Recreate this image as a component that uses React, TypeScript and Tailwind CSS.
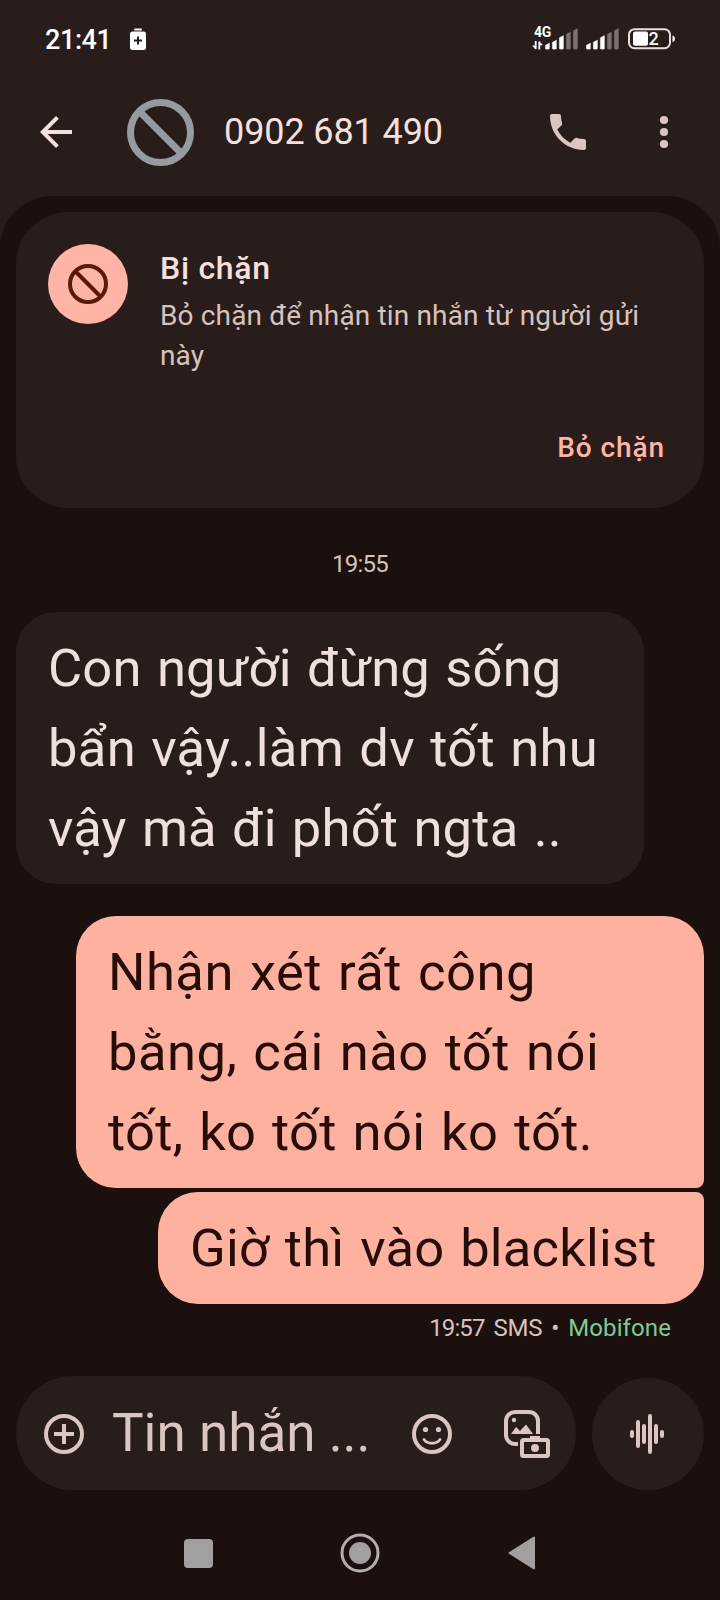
import type { ReactNode } from "react";
import clsx from "clsx";

const signalBars = [
  { x: 0, top: 15 },
  { x: 7, top: 12 },
  { x: 14, top: 7.5 },
  { x: 21, top: 4 },
  { x: 28, top: 0.5 },
];

function Signal() {
  return (
    <svg width="33" height="22" viewBox="0 0 33 22">
      {signalBars.map((b, i) => (
        <path
          key={b.x}
          d={`M${b.x + 0.3} ${b.top + 2.2}L${b.x + 4.5} ${b.top}V20.2a1 1 0 0 1-1 1H${b.x + 1.3}a1 1 0 0 1-1-1Z`}
          fill={i < 3 ? "#ffffff" : "#7b7270"}
          stroke={i < 3 ? "#ffffff" : "#7b7270"}
          strokeWidth="0.3"
        />
      ))}
    </svg>
  );
}

function StatusBar() {
  return (
    <div className="flex h-[68px] items-start pt-[28px] pl-[45px] pr-[44px] text-white">
      <span className="mt-[-4px] w-[85px] text-[27px] font-medium leading-8 tracking-[-0.4px]">21:41</span>
      <svg className="mr-auto shrink-0" width="16" height="22" viewBox="0 0 16 22">
        <rect x="4" y="0.5" width="8" height="2" rx="1" fill="#fff" />
        <rect x="0" y="3.5" width="16" height="18.5" rx="2.5" fill="#fff" />
        <path d="M8 8.5v8M4 12.5h8" stroke="#281d1b" strokeWidth="2" />
      </svg>
      <div className="relative flex shrink-0">
        <span className="absolute -left-[11px] -top-[4px] text-[14px] font-bold leading-4 tracking-[-0.3px]">4G</span>
        <svg className="absolute -left-[13px] top-[13px]" width="11" height="9" viewBox="0 0 11 9">
          <path d="M3.7 0v8M7.3 8.5V.5" stroke="#fff" strokeWidth="1.8" />
          <path d="M0 4.5l3.700 4V4.500ZM11 4.200L7.300.5v3.700Z" fill="#fff" />
        </svg>
        <Signal />
      </div>
      <div className="ml-[8px] shrink-0">
        <Signal />
      </div>
      <svg className="ml-[9px] shrink-0" width="48" height="22" viewBox="0 0 48 22">
        <rect x="1" y="1.2" width="41" height="19" rx="5.5" fill="none" stroke="#e6e2e1" strokeWidth="2" />
        <path d="M44.5 7.5c2 .5 2.3 1.5 2.3 3.3s-.3 2.7-2.3 3.2Z" fill="#fff" />
        <rect x="5" y="3.5" width="15" height="14.3" rx="2" fill="#fff" />
        <text x="20.5" y="17.4" fill="#fff" fontSize="18" fontWeight="500" fontFamily="Roboto, sans-serif">
          2
        </text>
      </svg>
    </div>
  );
}

function BlockIcon({ size, stroke, color }: { size: number; stroke: number; color: string }) {
  const r = (size - stroke) / 2;
  const c = size / 2;
  const d = r * Math.SQRT1_2;
  return (
    <svg width={size} height={size} viewBox={`0 0 ${size} ${size}`} fill="none" stroke={color} strokeWidth={stroke}>
      <circle cx={c} cy={c} r={r} />
      <path d={`M${c - d} ${c - d}L${c + d} ${c + d}`} />
    </svg>
  );
}

function TopBar() {
  return (
    <header className="flex h-32 items-center pl-8 pr-8">
      <svg width="48" height="48" viewBox="0 0 24 24" fill="#f5e0dc">
        <path d="M20 11H7.83l5.59-5.59L12 4l-8 8 8 8 1.41-1.41L7.83 13H20v-2z" />
      </svg>
      <div className="ml-[46.5px]">
        <BlockIcon size={67} stroke={7} color="#969b9f" />
      </div>
      <h1 className="ml-[30.5px] text-[36px] leading-10 tracking-[-0.1px] text-[#f5e0dc]">0902 681 490</h1>
      <svg className="ml-auto" width="48" height="48" viewBox="0 0 24 24" fill="#dbc5c0">
        <path d="M6.54 5c.06.89.21 1.76.45 2.59l-1.2 1.2c-.41-1.2-.67-2.47-.76-3.79h1.51M6.62 10.79c1.44 2.83 3.76 5.14 6.59 6.59l2.2-2.2c.27-.27.67-.36 1.02-.24 1.12.37 2.33.57 3.57.57.55 0 1 .45 1 1V20c0 .55-.45 1-1 1-9.39 0-17-7.61-17-17 0-.55.45-1 1-1h3.5c.55 0 1 .45 1 1 0 1.25.2 2.45.57 3.57.11.35.03.74-.25 1.02l-2.2 2.2z" />
      </svg>
      <svg className="ml-[48px]" width="48" height="48" viewBox="0 0 24 24" fill="#dbc5c0">
        <circle cx="12" cy="6" r="2.05" />
        <circle cx="12" cy="12" r="2.05" />
        <circle cx="12" cy="18" r="2.05" />
      </svg>
    </header>
  );
}

function BlockedCard() {
  return (
    <section className="h-[296px] rounded-[52px] bg-[#281d1b] px-8 pt-8">
      <div className="flex">
        <div className="flex size-20 shrink-0 items-center justify-center rounded-full bg-[#ffb4a5]">
          <BlockIcon size={40} stroke={4} color="#5b190d" />
        </div>
        <div className="ml-8 whitespace-nowrap">
          <h2 className="text-[32px] font-medium leading-[48px] tracking-[0.7px] text-[#f5e0dc]">Bị chặn</h2>
          <p className="mt-1 text-[28px] leading-10 tracking-[0.15px] text-[#d8c2bd]">
            <span className="block">Bỏ chặn để nhận tin nhắn từ người gửi</span>
            <span className="block">này</span>
          </p>
        </div>
      </div>
      <div className="mt-[52px] flex justify-end pr-2">
        <button className="-mr-[0.9px] text-[28px] font-medium leading-10 tracking-[0.9px] text-[#ffb4a5]">Bỏ chặn</button>
      </div>
    </section>
  );
}

function Bubble({ className, children }: { className: string; children: ReactNode }) {
  return (
    <div className={clsx("whitespace-nowrap px-8 py-4 text-[52.5px] leading-[80px]", className)}>
      {children}
    </div>
  );
}

function Composer() {
  return (
    <div className="mt-8 flex items-end gap-4">
      <div className="flex h-[114px] w-[560px] items-center rounded-full bg-[#281d1b] pl-7 pt-0.5">
        <svg width="40" height="40" viewBox="0 0 40 40" fill="none" stroke="#dbc5c0" strokeWidth="4">
          <circle cx="20" cy="20" r="18" />
          <path d="M20 10v20M10 20h20" />
        </svg>
        <span className="-mt-0.5 ml-7 w-[272px] whitespace-nowrap text-[53px] leading-[80px] text-[#dbc5c0]">Tin nhắn ...</span>
        <svg className="ml-7" width="40" height="40" viewBox="0 0 40 40" fill="none" stroke="#dbc5c0">
          <circle cx="20" cy="20" r="18" strokeWidth="4" />
          <path d="M12 25.5c3.5 5 12.5 5 16 0" strokeWidth="2.8" strokeLinecap="round" />
          <circle cx="13.5" cy="15.5" r="2.6" fill="#dbc5c0" stroke="none" />
          <circle cx="26.5" cy="15.5" r="2.6" fill="#dbc5c0" stroke="none" />
        </svg>
        <svg className="ml-[52px]" width="46" height="48" viewBox="0 0 46 48" fill="none" stroke="#dbc5c0">
          <path d="M14 34h-3a9 9 0 0 1-9-9V11a9 9 0 0 1 9-9h14a9 9 0 0 1 9 9v13" strokeWidth="4" />
          <circle cx="10" cy="10" r="2.2" fill="#dbc5c0" stroke="none" />
          <path d="M7 24l5-7 4 4 6-6.500 7 9.500Z" fill="#dbc5c0" stroke="none" />
          <rect x="18" y="30" width="26" height="16" rx="1.5" strokeWidth="4" />
          <path d="M26 29v-3h10v3Z" fill="#dbc5c0" stroke="none" />
          <circle cx="31" cy="38" r="4" fill="#dbc5c0" stroke="none" />
        </svg>
      </div>
      <div className="flex size-28 items-center justify-center rounded-full bg-[#281d1b] pr-0.5">
        <svg width="36" height="40" viewBox="0 0 36 40" stroke="#dbc5c0" strokeWidth="4" strokeLinecap="round">
          <path d="M3 18v4M9 8v24M15 12v16M21 2v36M27 12v16M33 18v4" />
        </svg>
      </div>
    </div>
  );
}

function NavBar() {
  return (
    <nav className="mt-[43px] flex h-10 items-center pl-[168px]">
      <div className="size-[29px] rounded-[4px] bg-[#a39f9e]" />
      <svg className="ml-[127px]" width="40" height="40" viewBox="0 0 40 40">
        <circle cx="20" cy="20" r="18" fill="none" stroke="#b3afae" strokeWidth="3" />
        <circle cx="20" cy="20" r="11" fill="#a39f9e" />
      </svg>
      <svg className="ml-[128px]" width="28" height="34" viewBox="0 0 28 34">
        <path d="M1.5 17L26 1.5v31Z" fill="#a39f9e" stroke="#a39f9e" strokeWidth="2" strokeLinejoin="round" />
      </svg>
    </nav>
  );
}

export default function App() {
  return (
    <div className="h-[1600px] w-[720px] overflow-hidden bg-[#281d1b] font-['Roboto','Noto_Sans',sans-serif]">
      <StatusBar />
      <TopBar />
      <main className="h-[1404px] rounded-t-[52px] bg-[#1b100e] px-4 pt-4">
        <BlockedCard />
        <p className="mt-10 text-center text-[24px] leading-8 tracking-[-0.8px] text-[#d8c2bd]">19:55</p>

        <div className="mt-8 flex flex-col">
          <Bubble className="w-[628px] rounded-[40px] bg-[#281d1b] text-[#f1dfdb]">
            <span className="block tracking-[0.2px] [word-spacing:2px]">Con người đừng sống</span>
            <span className="block tracking-[0.3px] [word-spacing:2px]">bẩn vậy..làm dv tốt nhu</span>
            <span className="block tracking-[0.2px] [word-spacing:2px]">vậy mà đi phốt ngta ..</span>
          </Bubble>
          <Bubble className="mt-8 w-[628px] self-end rounded-[40px] rounded-br-lg bg-[#ffb1a0] text-[#260d07]">
            <span className="block tracking-[0.5px] [word-spacing:2.5px]">Nhận xét rất công</span>
            <span className="block tracking-[0.5px] [word-spacing:2.5px]">bằng, cái nào tốt nói</span>
            <span className="block tracking-[0.3px] [word-spacing:2.5px]">tốt, ko tốt nói ko tốt.</span>
          </Bubble>
          <Bubble className="mt-1 w-[546px] self-end rounded-[40px] rounded-tr-lg bg-[#ffb1a0] text-[#260d07]">
            <span className="block tracking-[0.2px] [word-spacing:2.5px]">Giờ thì vào blacklist</span>
          </Bubble>
        </div>

        <div className="mt-2 flex justify-end gap-[9px] pr-[33px] text-[24px] leading-8 text-[#d8c2bd]">
          <span className="tracking-[-0.9px]">19:57</span>
          <span className="tracking-[-0.3px]">SMS</span>
          <span>•</span>
          <span className="tracking-[0.1px] text-[#81c995]">Mobifone</span>
        </div>

        <Composer />
        <NavBar />
      </main>
    </div>
  );
}
